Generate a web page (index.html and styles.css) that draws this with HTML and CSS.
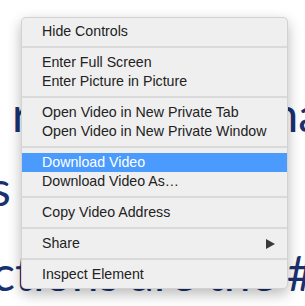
FILE: index.html
```html
<!DOCTYPE html>
<html lang="en">
<head>
  <meta charset="UTF-8">
  <meta name="viewport" content="width=device-width, initial-scale=1.0">
  <title>Video context menu</title>
  <link rel="stylesheet" href="styles.css">
</head>
<body>
  <div class="article">
    <p class="line line-first">reporting in analytics</p>
    <p class="line line-second">s and sales</p>
    <p class="line line-third">ctions are the #1</p>
  </div>

  <ul class="context-menu">
    <li class="menu-item">Hide Controls</li>
    <li class="menu-sep"></li>
    <li class="menu-item">Enter Full Screen</li>
    <li class="menu-item">Enter Picture in Picture</li>
    <li class="menu-sep"></li>
    <li class="menu-item">Open Video in New Private Tab</li>
    <li class="menu-item">Open Video in New Private Window</li>
    <li class="menu-sep"></li>
    <li class="menu-item active">Download Video</li>
    <li class="menu-item">Download Video As…</li>
    <li class="menu-sep"></li>
    <li class="menu-item">Copy Video Address</li>
    <li class="menu-sep"></li>
    <li class="menu-item has-sub">
      <span>Share</span>
      <svg class="sub-arrow" width="9" height="10" viewBox="0 0 9 10"><path d="M0 0 L9 5 L0 10 Z" fill="#3a3a3a"/></svg>
    </li>
    <li class="menu-sep"></li>
    <li class="menu-item">Inspect Element</li>
  </ul>
</body>
</html>
```

FILE: styles.css
```css
:root {
  --menu-bg: #efefef;
  --menu-text: #222222;
  --menu-sep: #dadada;
  --highlight: #4a9bfd;
  --ink: #1a3170;
}

body {
  margin: 0;
  padding: 0;
  background: #ffffff;
  width: 305px;
  height: 306px;
  overflow: hidden;
  position: relative;
}

.article {
  padding-top: 77px;
}

.line {
  margin: 0;
  font-family: 'Lato', 'Open Sans', sans-serif;
  font-weight: 400;
  font-size: 48px;
  line-height: 74px;
  color: var(--ink);
  white-space: nowrap;
}

.line-first {
  text-indent: 12px;
  word-spacing: -11px;
}

.line-second {
  text-indent: -10px;
}

.line-third {
  margin-top: 11px;
  text-indent: -8px;
  word-spacing: -1.5px;
}

.context-menu {
  position: absolute;
  left: 21px;
  top: 17px;
  width: 267px;
  margin: 0;
  padding: 4px 0;
  list-style: none;
  box-sizing: border-box;
  background: var(--menu-bg);
  border: 1px solid rgba(0, 0, 0, 0.12);
  border-radius: 5px;
  box-shadow: 0 5px 14px rgba(0, 0, 0, 0.28);
  font-family: 'Liberation Sans', Arial, sans-serif;
  font-size: 14.2px;
  color: var(--menu-text);
}

.menu-item {
  height: 19px;
  line-height: 19px;
  padding: 0 12px 0 20px;
  display: flex;
  align-items: center;
  justify-content: space-between;
  white-space: nowrap;
}

.menu-item.active {
  background: var(--highlight);
  color: #ffffff;
}

.menu-sep {
  height: 2px;
  margin: 5px 0;
  background: var(--menu-sep);
}

.sub-arrow {
  display: block;
}
```
